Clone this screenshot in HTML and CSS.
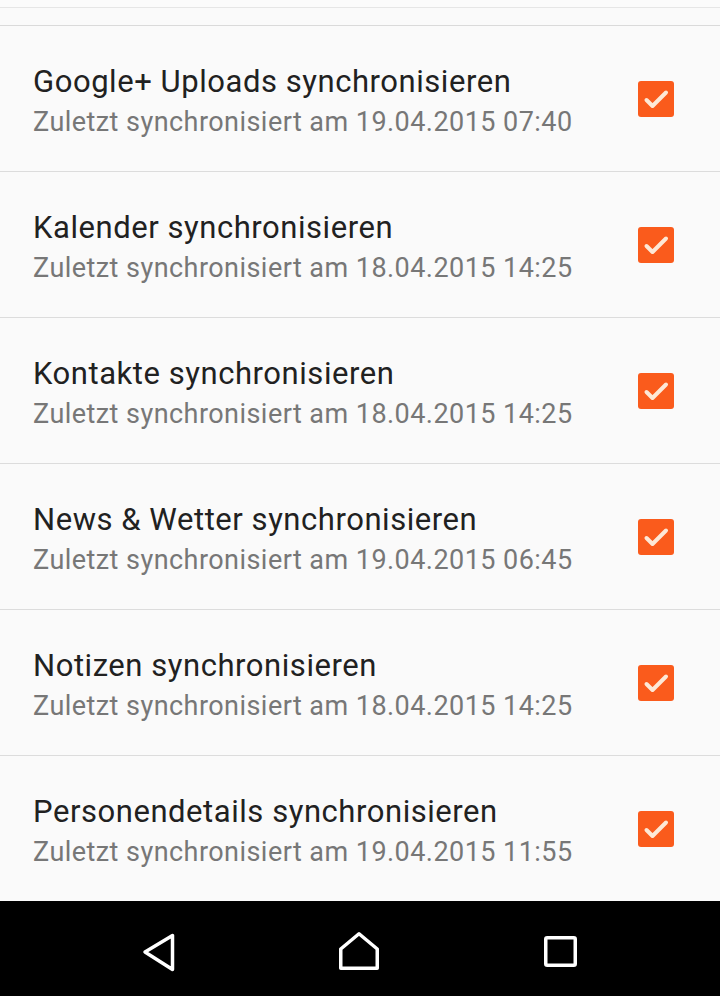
FILE: index.html
```html
<!DOCTYPE html>
<html lang="de">
<head>
<meta charset="utf-8">
<link rel="stylesheet" href="styles.css">
</head>
<body>
<div class="screen">
  <div class="prev"></div>
  <div class="spacer"></div>
  <ul class="list">
    <li class="row">
      <div class="texts"><div class="title">Google+ Uploads synchronisieren</div><div class="sub">Zuletzt synchronisiert am 19.04.2015 07:40</div></div>
      <span class="check"><svg viewBox="0 0 36 36" width="36" height="36"><path d="M8.5 19 L14.5 25 L28 11.5"/></svg></span>
    </li>
    <li class="row">
      <div class="texts"><div class="title">Kalender synchronisieren</div><div class="sub">Zuletzt synchronisiert am 18.04.2015 14:25</div></div>
      <span class="check"><svg viewBox="0 0 36 36" width="36" height="36"><path d="M8.5 19 L14.5 25 L28 11.5"/></svg></span>
    </li>
    <li class="row">
      <div class="texts"><div class="title">Kontakte synchronisieren</div><div class="sub">Zuletzt synchronisiert am 18.04.2015 14:25</div></div>
      <span class="check"><svg viewBox="0 0 36 36" width="36" height="36"><path d="M8.5 19 L14.5 25 L28 11.5"/></svg></span>
    </li>
    <li class="row">
      <div class="texts"><div class="title">News &amp; Wetter synchronisieren</div><div class="sub">Zuletzt synchronisiert am 19.04.2015 06:45</div></div>
      <span class="check"><svg viewBox="0 0 36 36" width="36" height="36"><path d="M8.5 19 L14.5 25 L28 11.5"/></svg></span>
    </li>
    <li class="row">
      <div class="texts"><div class="title">Notizen synchronisieren</div><div class="sub">Zuletzt synchronisiert am 18.04.2015 14:25</div></div>
      <span class="check"><svg viewBox="0 0 36 36" width="36" height="36"><path d="M8.5 19 L14.5 25 L28 11.5"/></svg></span>
    </li>
    <li class="row last">
      <div class="texts"><div class="title">Personendetails synchronisieren</div><div class="sub">Zuletzt synchronisiert am 19.04.2015 11:55</div></div>
      <span class="check"><svg viewBox="0 0 36 36" width="36" height="36"><path d="M8.5 19 L14.5 25 L28 11.5"/></svg></span>
    </li>
  </ul>
  <nav class="navbar">
    <span class="navbtn back"><svg viewBox="0 0 80 95" width="80" height="95"><path d="M27 51 L54.5 34.5 V68.5 Z"/></svg></span>
    <span class="navbtn home"><svg viewBox="0 0 80 95" width="80" height="95"><path d="M21.75 67.25 V48 L40 32.75 L58.25 48 V67.25 Z"/></svg></span>
    <span class="navbtn recents"><svg viewBox="0 0 80 95" width="80" height="95"><rect x="25.75" y="36.75" width="29.5" height="27.5" rx="1.5"/></svg></span>
  </nav>
</div>
</body>
</html>
```
FILE: styles.css
```css
html, body {
  margin: 0;
  padding: 0;
  background: #fafafa;
}
.screen {
  width: 720px;
  height: 996px;
  overflow: hidden;
  display: flex;
  flex-direction: column;
  font-family: Roboto, "Noto Sans", sans-serif;
}
.prev {
  height: 7px;
  border-bottom: 1px solid #e6e6e6;
  background: #fbfbfb;
}
.spacer {
  height: 17px;
  border-bottom: 1px solid #dadada;
}
.list {
  list-style: none;
  margin: 0;
  padding: 0;
}
.row {
  box-sizing: border-box;
  height: 146px;
  border-bottom: 1px solid #dcdcdc;
  display: flex;
  align-items: center;
  padding: 0 46px 0 33px;
}
.row.last {
  height: 145px;
  border-bottom: none;
}
.texts {
  flex: 1;
  padding-top: 4px;
}
.title {
  font-size: 31px;
  line-height: 42px;
  letter-spacing: 0.55px;
  color: #212121;
  margin-bottom: 1px;
}
.sub {
  font-size: 27px;
  line-height: 36px;
  letter-spacing: 0.45px;
  color: #777777;
}
.check {
  width: 36px;
  height: 36px;
  border-radius: 3px;
  background: #fa5b1c;
  display: block;
}
.check svg {
  display: block;
  fill: none;
  stroke: #fde8d6;
  stroke-width: 4;
  stroke-linecap: round;
  stroke-linejoin: round;
}
.navbar {
  height: 95px;
  background: #000;
  display: flex;
  padding-left: 118px;
  gap: 121px;
}
.navbtn {
  width: 80px;
  height: 95px;
  display: block;
}
.navbtn svg {
  display: block;
  fill: none;
  stroke: #fff;
  stroke-width: 3.5;
  stroke-linejoin: round;
  stroke-linecap: round;
}
```
